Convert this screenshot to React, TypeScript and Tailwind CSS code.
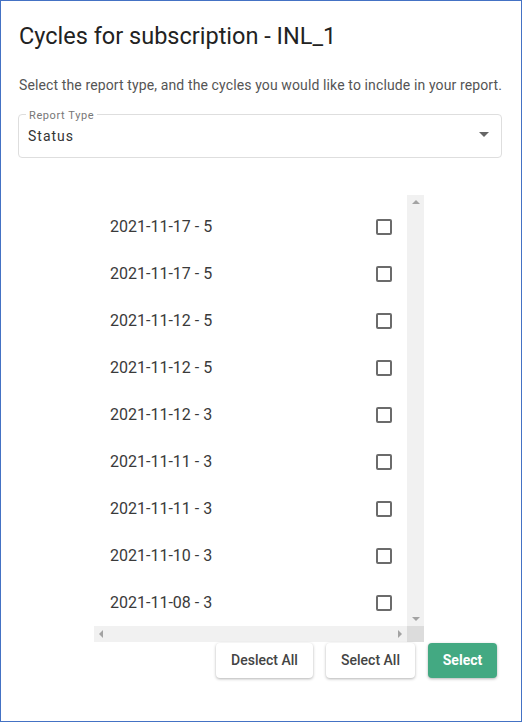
import React from "react";

const rows = [
  "2021-11-17 - 5",
  "2021-11-17 - 5",
  "2021-11-12 - 5",
  "2021-11-12 - 5",
  "2021-11-12 - 3",
  "2021-11-11 - 3",
  "2021-11-11 - 3",
  "2021-11-10 - 3",
  "2021-11-08 - 3",
];

export default function App() {
  return (
    <div
      className="w-[522px] h-[722px] bg-white border border-[#4472c4] flex flex-col"
      style={{ fontFamily: "Roboto, 'Liberation Sans', sans-serif" }}
    >
      <div className="pl-[18px] pt-[20px] text-[23.5px] leading-[30px] text-[#222]">
        Cycles for subscription - INL_1
      </div>
      <div className="pl-[18px] pt-[24px] text-[14px] tracking-[0.12px] leading-[20px] text-[#555]">
        Select the report type, and the cycles you would like to include in your report.
      </div>
      <div className="ml-[17px] mr-[19px] mt-[19px] h-[44px] relative border border-[#dedede] rounded-[4px] flex items-center">
        <div className="absolute left-[7px] top-[-5px] bg-white px-[3px] text-[11px] leading-[12px] tracking-[0.6px] text-[#777]">
          Report Type
        </div>
        <div className="pl-[9px] text-[14px] tracking-[1px] text-[#333]">Status</div>
        <div className="ml-auto mr-[12px] mb-[4px] w-0 h-0 border-l-[5px] border-r-[5px] border-t-[5px] border-l-transparent border-r-transparent border-t-[#666]" />
      </div>
      <div className="ml-[93px] mt-[37px] w-[330px] flex flex-col">
        <div className="flex h-[431px]">
          <div className="flex-1 pt-[8px] flex flex-col">
            {rows.map((r, i) => (
              <div key={i} className="h-[47px] flex items-center pl-[16px] pr-[15px]">
                <span className="text-[16px] text-[#3a3a3a]">{r}</span>
                <span className="ml-auto w-[16px] h-[16px] border-2 border-[#6b6b6b] rounded-[2px]" />
              </div>
            ))}
          </div>
          <div className="w-[17px] bg-[#f1f1f1] flex flex-col items-center justify-between py-[5px]">
            <div className="w-0 h-0 border-l-[4px] border-r-[4px] border-b-[4px] border-l-transparent border-r-transparent border-b-[#a3a3a3]" />
            <div className="w-0 h-0 border-l-[4px] border-r-[4px] border-t-[4px] border-l-transparent border-r-transparent border-t-[#a3a3a3]" />
          </div>
        </div>
        <div className="flex h-[16px]">
          <div className="flex-1 bg-[#f1f1f1] flex items-center justify-between px-[5px]">
            <div className="w-0 h-0 border-t-[4px] border-b-[4px] border-r-[4px] border-t-transparent border-b-transparent border-r-[#a3a3a3]" />
            <div className="w-0 h-0 border-t-[4px] border-b-[4px] border-l-[4px] border-t-transparent border-b-transparent border-l-[#a3a3a3]" />
          </div>
          <div className="w-[17px] bg-[#dcdcdc]" />
        </div>
      </div>
      <div className="flex justify-end gap-[13px] pr-[24px] mt-[1px]">
        <button className="w-[97px] h-[35px] bg-white rounded-[4px] text-[14px] font-medium text-[#444] shadow-[0_1px_3px_rgba(0,0,0,0.3)]">
          Deslect All
        </button>
        <button className="w-[89px] h-[35px] bg-white rounded-[4px] text-[14px] font-medium text-[#444] shadow-[0_1px_3px_rgba(0,0,0,0.3)]">
          Select All
        </button>
        <button className="w-[69px] h-[35px] bg-[#43a982] rounded-[4px] text-[14px] font-bold text-white shadow-[0_1px_3px_rgba(0,0,0,0.3)]">
          Select
        </button>
      </div>
    </div>
  );
}
